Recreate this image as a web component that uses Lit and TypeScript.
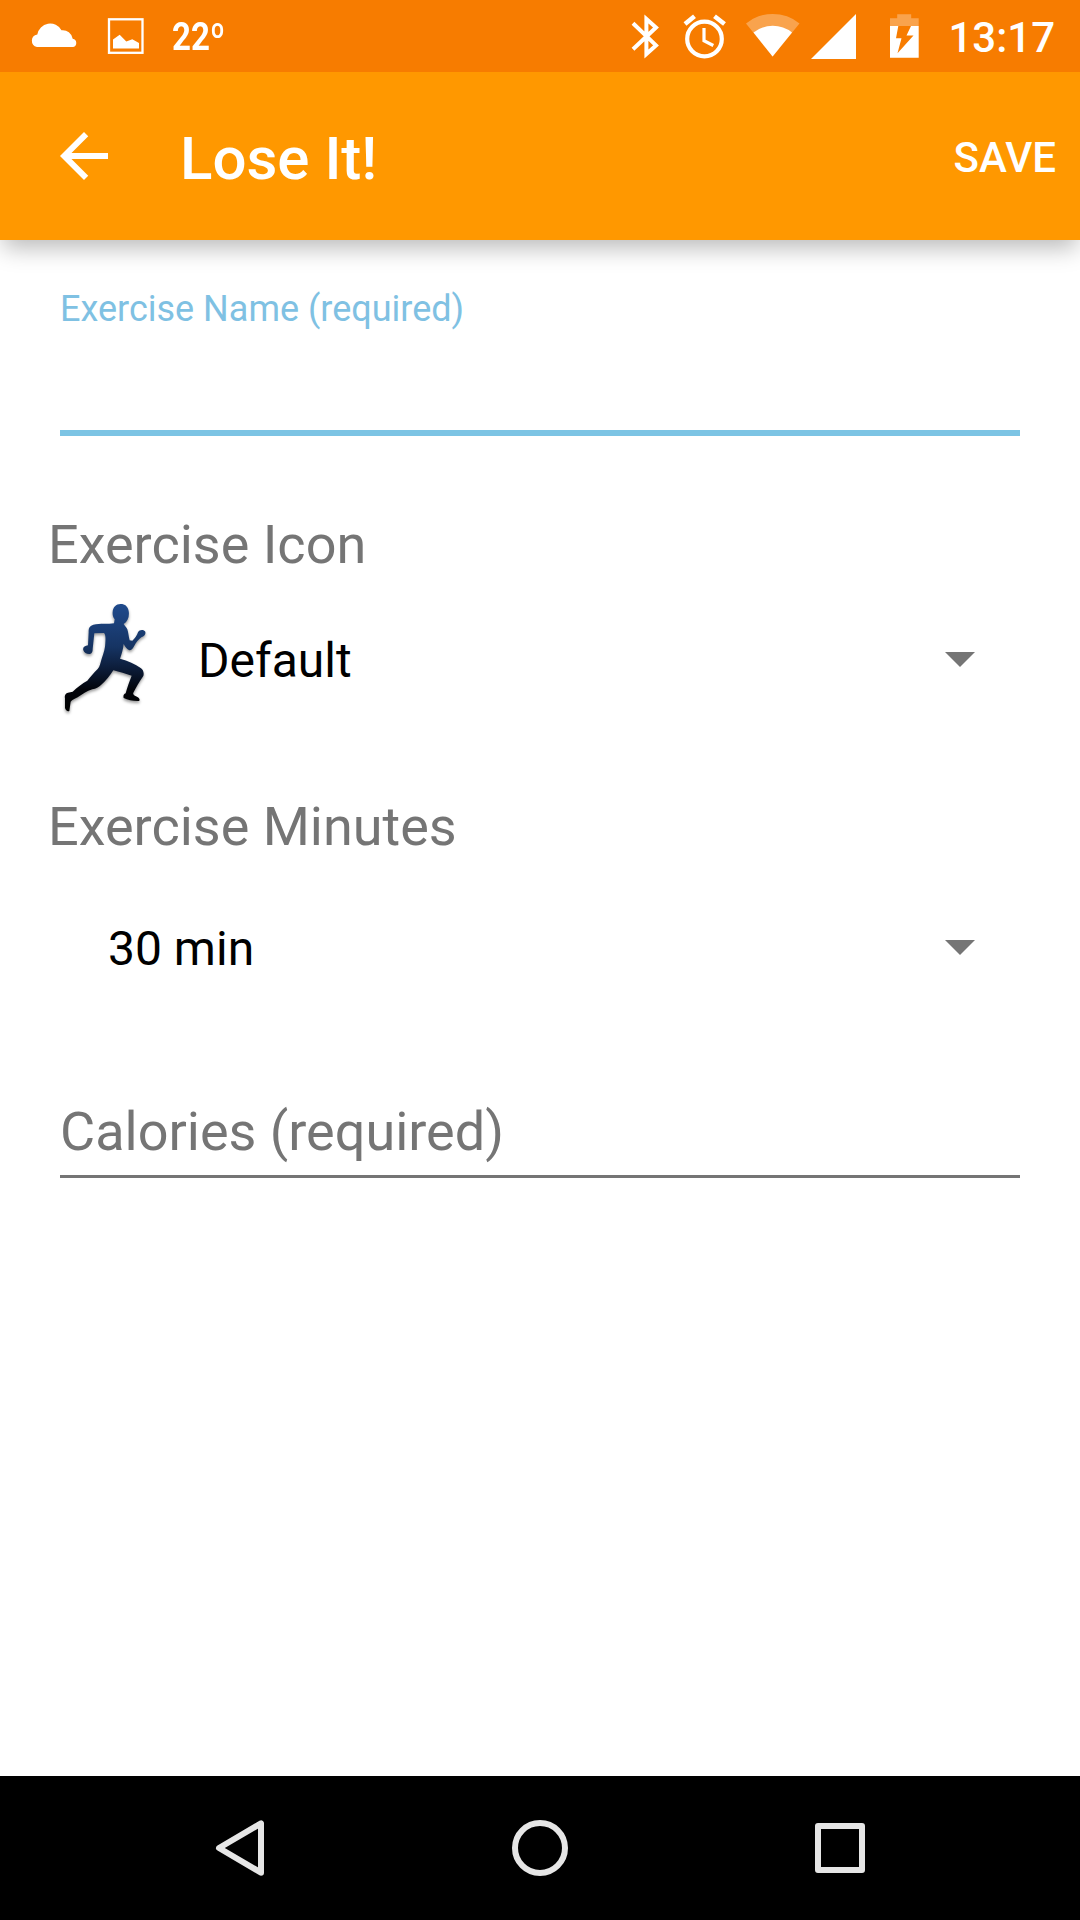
import { LitElement, html, css, svg } from "lit";
import { customElement, property } from "lit/decorators.js";

@customElement("status-bar")
class StatusBar extends LitElement {
  static styles = css`
    :host { display: flex; height: 72px; background: #f77c00; color: #fff; position: relative; z-index: 2; }
    .left, .right { display: flex; align-items: flex-start; }
    .right { margin-left: auto; padding-right: 25px; }
    svg { display: block; height: 72px; }
    .temp { font: 700 38px/74px "Roboto", sans-serif; width: 54px; margin-left: 4px; transform: scaleX(.87); transform-origin: left; white-space: nowrap; }
    .time { font: 500 42px/76px "Roboto", sans-serif; }
  `;
  render() {
    return html`
      <div class="left">
        <svg width="168" height="72" viewBox="0 0 168 72">
          <path fill="#fff" d="M37 47a6.400 6.400 0 0 1 .3-12.600A13 13 0 0 1 61.500 30.300 10 10 0 0 1 72.700 38.800 4.200 4.200 0 0 1 73.200 47z"/>
          <rect x="109" y="19.300" width="33.500" height="33.500" fill="none" stroke="#fff" stroke-width="2.300"/>
          <path fill="#fff" d="M113 48.500v-9l6.700-4.800 6.600 6.800 6-2.200 6.700 3.700v5.500z"/>
        </svg>
        <div class="temp">22º</div>
      </div>
      <div class="right">
        <svg width="322" height="72" viewBox="0 0 322 72">
          <g transform="translate(-626 0)">
            <path fill="none" stroke="#fff" stroke-width="4" d="M633 23.300L656 45.400 646.400 54V19L656 27.500 633 49.300"/>
            <circle cx="704.500" cy="39" r="17.300" fill="none" stroke="#fff" stroke-width="4.200"/>
            <path fill="none" stroke="#fff" stroke-width="3.200" d="M704 28v12.700l9.300 4.800"/>
            <path fill="none" stroke="#fff" stroke-width="4.600" d="M685 24l9.500-7.700M714.500 16.300l10 7.700"/>
            <path fill="#fff" fill-opacity=".3" d="M746 23.500a42 42 0 0 1 53.500 0L772.600 56.500z"/>
            <path fill="#fff" d="M753.500 32.500a31 31 0 0 1 38.500 0L772.600 56.500z"/>
            <path fill="#fff" d="M811 59L856 14v45z"/>
            <path fill="#fff" fill-opacity=".3" d="M890 26v-7.700h7.200V14.300h14v4h7.500V26z"/>
            <path fill="#fff" fill-rule="evenodd" d="M890 26h28.700v31.700H890zM898.300 26L896 38.200h5.500L897.500 53.300 913.500 35.500h-7L911 26z"/>
          </g>
        </svg>
        <div class="time">13:17</div>
      </div>
    `;
  }
}

@customElement("app-toolbar")
class AppToolbar extends LitElement {
  static styles = css`
    :host { display: flex; align-items: center; height: 168px; background: #ff9800; color: #fff; padding: 0 24px 0 48px; box-sizing: border-box; position: relative; box-shadow: 0 11px 22px -3px rgba(0, 0, 0, .27); font-family: "Roboto", sans-serif; }
    svg { display: block; width: 72px; height: 72px; }
    .title { margin-left: 60px; font-size: 60px; line-height: 70px; font-weight: 500; padding-top: 5px; }
    .save { margin-left: auto; font-size: 42px; line-height: 50px; font-weight: 500; padding-top: 4px; }
  `;
  render() {
    return html`
      <svg viewBox="0 0 24 24"><path fill="#fff" d="M20 11H7.830l5.590-5.590L12 4l-8 8 8 8 1.410-1.410L7.830 13H20v-2z"/></svg>
      <div class="title">Lose It!</div>
      <div class="save">SAVE</div>
    `;
  }
}

const runner = svg`
  <defs>
    <linearGradient id="g" x1="0" y1="0" x2="0" y2="1">
      <stop offset="0" stop-color="#1f4a8c"/>
      <stop offset=".4" stop-color="#163463"/>
      <stop offset=".62" stop-color="#0b1a35"/>
      <stop offset=".8" stop-color="#02040a"/>
      <stop offset="1" stop-color="#000"/>
    </linearGradient>
  </defs>
  <path fill="url(#g)" d="M242 72C228 72 219 82 218 95C217 105 219 112 224 118L222 130C205 133 180 130 160 134C149 137 145 144 146 156L144 196C134 197 127 203 130 211C132 219 141 223 150 222C157 220 158 214 158 207L163 160L192 159C197 164 197 175 196 188C196 203 191 218 185 236C181 248 180 259 173 267C160 279 152 291 142 302C126 311 112 321 98 335L84 338C76 340 73 347 75 355L75 384C77 391 82 395 88 393L92 365C97 359 105 356 113 352C127 344 140 332 157 328C168 327 176 321 183 315C197 303 211 286 220 271C238 275 257 282 275 287C268 304 261 325 257 340C251 342 249 347 251 354C264 360 281 364 297 363C302 358 296 352 288 349C282 346 278 343 280 338C288 323 298 304 310 288C313 277 309 269 302 264C286 252 264 242 240 236C245 222 249 210 251 192C255 200 261 207 268 211C275 211 279 205 283 197C288 188 296 178 304 172C314 168 319 161 315 154C309 148 298 149 294 157C291 166 285 175 277 182L269 181C266 170 265 157 262 148C259 141 254 137 251 132C263 125 269 110 266 93C264 80 255 72 242 72Z"/>
`;

@customElement("spinner-row")
class SpinnerRow extends LitElement {
  static styles = css`
    :host { display: flex; align-items: center; height: 145px; padding: 0 105px 0 48px; }
    .runner { width: 140px; height: 150px; flex: none; margin: 0 0 9px -8px; overflow: visible; filter: drop-shadow(0 2px 1.500px rgba(0, 0, 0, .4)); }
    .value { font: 400 48px/56px "Roboto", sans-serif; color: #000; padding: 3px 0 0 60px; }
    .with-icon { padding-left: 18px; }
    .arrow { width: 30px; height: 15px; margin-left: auto; display: block; }
  `;
  @property() value = "";
  @property({ type: Boolean }) icon = false;
  render() {
    return html`
      ${this.icon ? html`<svg class="runner" viewBox="0 0 420 450">${runner}</svg>` : ""}
      <div class="value ${this.icon ? "with-icon" : ""}">${this.value}</div>
      <svg class="arrow" viewBox="0 0 30 15"><path fill="#757575" d="M0 0h30L15 15z"/></svg>
    `;
  }
}

@customElement("nav-bar")
class NavBar extends LitElement {
  static styles = css`
    :host { display: flex; justify-content: center; gap: 204px; align-items: center; height: 144px; background: #000; }
    svg { width: 96px; height: 96px; display: block; fill: none; stroke: #e6e6e6; stroke-width: 6; stroke-linejoin: round; }
  `;
  render() {
    return html`
      <svg viewBox="0 0 96 96"><path d="M27 48L69 23.300V72.700z"/></svg>
      <svg viewBox="0 0 96 96"><circle cx="48" cy="48" r="25"/></svg>
      <svg viewBox="0 0 96 96"><rect x="26" y="26" width="44" height="44"/></svg>
    `;
  }
}

@customElement("app-root")
class AppRoot extends LitElement {
  static styles = css`
    :host { display: flex; flex-direction: column; width: 1080px; height: 1920px; background: #fff; font-family: "Roboto", sans-serif; overflow: hidden; }
    .form { flex: 1; display: flex; flex-direction: column; padding-top: 46px; }
    .name { margin: 0 60px; height: 144px; border-bottom: 6px solid #7cc4e4; color: #7fc1e3; font-size: 36px; line-height: 46px; }
    .label { margin-left: 48px; font-size: 54px; line-height: 64px; color: #757575; }
    .icon-label { margin-top: 77px; }
    .minutes-label { margin-top: 63px; }
    .icon-row { margin-top: 10px; }
    .minutes-row { margin-top: 16px; }
    .calories { margin: 80px 60px 0; height: 75px; border-bottom: 3px solid #757575; font-size: 54px; line-height: 64px; color: #757575; }
  `;
  render() {
    return html`
      <status-bar></status-bar>
      <app-toolbar></app-toolbar>
      <div class="form">
        <div class="name">Exercise Name (required)</div>
        <div class="label icon-label">Exercise Icon</div>
        <spinner-row class="icon-row" icon value="Default"></spinner-row>
        <div class="label minutes-label">Exercise Minutes</div>
        <spinner-row class="minutes-row" value="30 min"></spinner-row>
        <div class="calories">Calories (required)</div>
      </div>
      <nav-bar></nav-bar>
    `;
  }
}
